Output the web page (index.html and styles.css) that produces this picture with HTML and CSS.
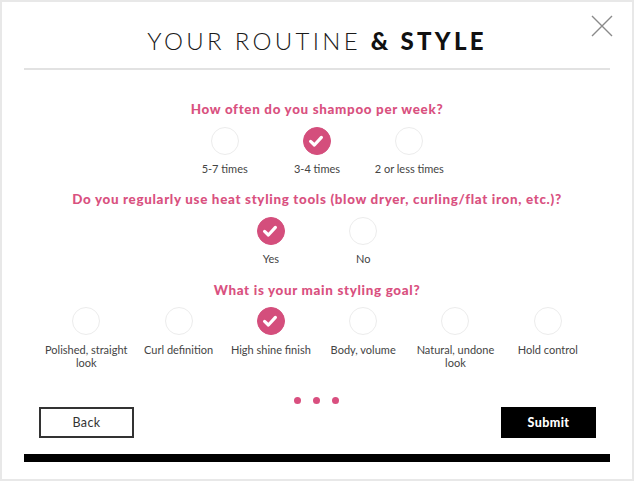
FILE: index.html
```html
<!DOCTYPE html>
<html lang="en">
<head>
<meta charset="utf-8">
<title>Your Routine &amp; Style</title>
<link rel="stylesheet" href="styles.css">
</head>
<body>
<div class="modal">
  <button class="close" aria-label="Close">
    <svg width="22" height="22" viewBox="0 0 22 22"><path d="M1 1 L21 21 M21 1 L1 21" stroke="#8a8a8a" stroke-width="1.4" fill="none"/></svg>
  </button>
  <h1 class="title"><span class="light">YOUR ROUTINE</span> <span class="bold">&amp; STYLE</span></h1>
  <div class="divider"></div>

  <section class="q q1">
    <h2 class="question">How often do you shampoo per week?</h2>
    <div class="options">
      <div class="opt"><span class="radio"></span><span class="label">5-7 times</span></div>
      <div class="opt"><span class="radio checked"><svg viewBox="0 0 28 28" width="28" height="28"><path d="M8.6 14.4 L12.4 18 L19.4 10.4" stroke="#fff" stroke-width="3.2" fill="none" stroke-linecap="round" stroke-linejoin="round"/></svg></span><span class="label">3-4 times</span></div>
      <div class="opt"><span class="radio"></span><span class="label">2 or less times</span></div>
    </div>
  </section>

  <section class="q q2">
    <h2 class="question">Do you regularly use heat styling tools (blow dryer, curling/flat iron, etc.)?</h2>
    <div class="options">
      <div class="opt"><span class="radio checked"><svg viewBox="0 0 28 28" width="28" height="28"><path d="M8.6 14.4 L12.4 18 L19.4 10.4" stroke="#fff" stroke-width="3.2" fill="none" stroke-linecap="round" stroke-linejoin="round"/></svg></span><span class="label">Yes</span></div>
      <div class="opt"><span class="radio"></span><span class="label">No</span></div>
    </div>
  </section>

  <section class="q q3">
    <h2 class="question">What is your main styling goal?</h2>
    <div class="options">
      <div class="opt"><span class="radio"></span><span class="label">Polished, straight look</span></div>
      <div class="opt"><span class="radio"></span><span class="label">Curl definition</span></div>
      <div class="opt"><span class="radio checked"><svg viewBox="0 0 28 28" width="28" height="28"><path d="M8.6 14.4 L12.4 18 L19.4 10.4" stroke="#fff" stroke-width="3.2" fill="none" stroke-linecap="round" stroke-linejoin="round"/></svg></span><span class="label">High shine finish</span></div>
      <div class="opt"><span class="radio"></span><span class="label">Body, volume</span></div>
      <div class="opt"><span class="radio"></span><span class="label">Natural, undone look</span></div>
      <div class="opt"><span class="radio"></span><span class="label">Hold control</span></div>
    </div>
  </section>

  <div class="dots"><span></span><span></span><span></span></div>

  <div class="actions">
    <button class="btn back">Back</button>
    <button class="btn submit">Submit</button>
  </div>

  <div class="bar"></div>
</div>
</body>
</html>
```

FILE: styles.css
```css
* { box-sizing: border-box; }
html, body { margin: 0; padding: 0; background: #fff; }
body { font-family: "Lato", "Open Sans", sans-serif; color: #444; }

.modal {
  position: relative;
  width: 634px;
  height: 481px;
  border: 2px solid #e8e8e8;
  display: flex;
  flex-direction: column;
}

.close {
  position: absolute;
  top: 13px;
  right: 19px;
  width: 22px;
  height: 22px;
  padding: 0;
  border: 0;
  background: none;
}
.close svg { display: block; }

.title {
  margin: 24px 0 0;
  height: 30px;
  line-height: 30px;
  font-size: 24px;
  text-align: center;
  letter-spacing: 3.3px;
  color: #1a1a1a;
  font-weight: 300;
}
.title .light { font-weight: 300; }
.title .bold { font-weight: 900; color: #111; }

.divider {
  margin: 12px 22px 0 22px;
  height: 2px;
  background: #e2e2e2;
}

.q { display: flex; flex-direction: column; align-items: center; }
.q1 { margin-top: 30px; }
.q2 { margin-top: 15px; }
.q3 { margin-top: 16px; }

.question {
  margin: 0;
  height: 18px;
  line-height: 18px;
  font-size: 13.4px;
  font-weight: 900;
  letter-spacing: 0.68px;
  color: #d9517f;
  text-align: center;
}

.options {
  display: flex;
  justify-content: center;
  margin-top: 9px;
}
.q3 .options { margin-top: 8px; }

.opt {
  width: 92.3px;
  display: flex;
  flex-direction: column;
  align-items: center;
}

.radio {
  width: 28px;
  height: 28px;
  border-radius: 50%;
  border: 1.5px solid #ececec;
  display: block;
}
.radio.checked {
  background: #d44e7c;
  border-color: #d44e7c;
  position: relative;
}
.radio.checked svg {
  display: block;
  margin: -1.5px;
}

.label {
  margin-top: 7px;
  max-width: 86px;
  font-size: 11px;
  line-height: 13px;
  letter-spacing: 0;
  color: #444;
  text-align: center;
}
.q3 .label { margin-top: 8px; }

.dots {
  display: flex;
  justify-content: center;
  gap: 12px;
  margin-top: 28px;
  margin-left: -1px;
}
.dots span {
  width: 7px;
  height: 7px;
  border-radius: 50%;
  background: #d94f7f;
}

.actions {
  display: flex;
  justify-content: space-between;
  padding: 0 36px 0 37px;
  margin-top: 3px;
}
.btn {
  width: 95px;
  height: 31px;
  font-family: "Lato", "Open Sans", sans-serif;
  font-size: 12.5px;
  letter-spacing: 0.4px;
  padding: 0;
}
.back {
  border: 2px solid #333;
  background: #fff;
  color: #333;
  font-weight: 400;
}
.submit {
  border: 1px solid #000;
  background: #000;
  color: #fff;
  font-weight: 900;
}

.bar {
  margin: 16px 22px 0 22px;
  height: 8px;
  background: #000;
}
```
